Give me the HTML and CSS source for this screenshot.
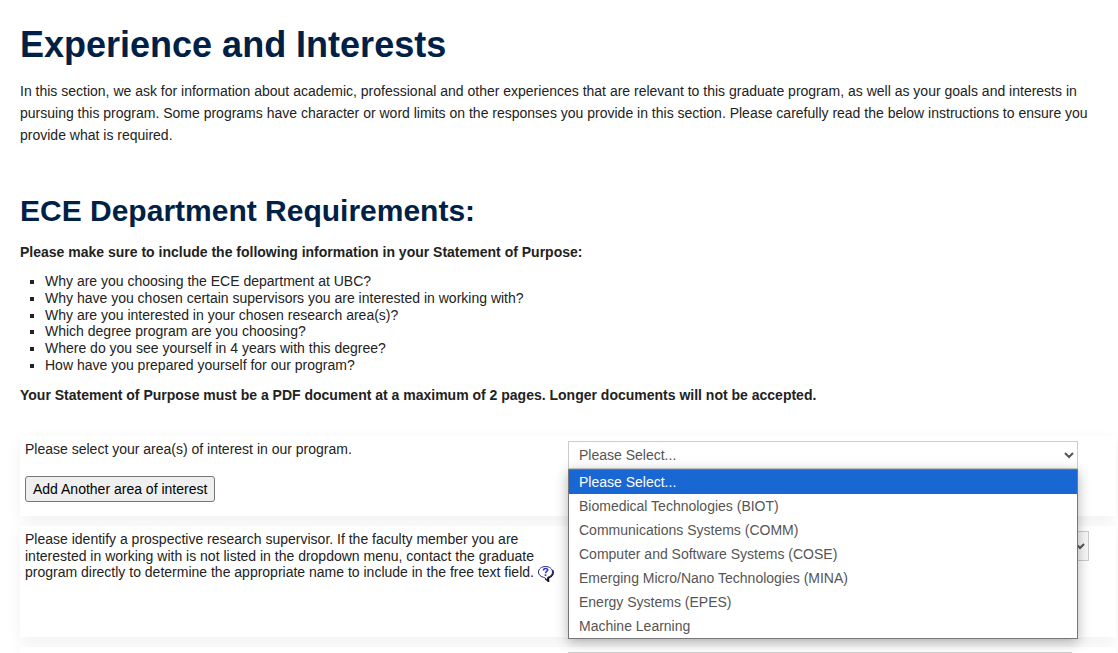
FILE: index.html
```html
<!DOCTYPE html>
<html lang="en">
<head>
<meta charset="utf-8">
<title>Experience and Interests</title>
<link rel="stylesheet" href="styles.css">
</head>
<body>
<main class="page">
  <h1 class="title">Experience and Interests</h1>
  <p class="intro">In this section, we ask for information about academic, professional and other experiences that are relevant to this graduate program, as well as your goals and interests in pursuing this program. Some programs have character or word limits on the responses you provide in this section. Please carefully read the below instructions to ensure you provide what is required.</p>
  <h2 class="subtitle">ECE Department Requirements:</h2>
  <p class="note">Please make sure to include the following information in your Statement of Purpose:</p>
  <ul class="questions">
    <li>Why are you choosing the ECE department at UBC?</li>
    <li>Why have you chosen certain supervisors you are interested in working with?</li>
    <li>Why are you interested in your chosen research area(s)?</li>
    <li>Which degree program are you choosing?</li>
    <li>Where do you see yourself in 4 years with this degree?</li>
    <li>How have you prepared yourself for our program?</li>
  </ul>
  <p class="note">Your Statement of Purpose must be a PDF document at a maximum of 2 pages. Longer documents will not be accepted.</p>

  <form class="fields">
    <div class="card">
      <div class="prompt">
        <label for="area">Please select your area(s) of interest in our program.</label>
        <button class="add" type="button">Add Another area of interest</button>
      </div>
      <div class="answer">
        <div class="dropdown">
          <select class="control" id="area">
            <option>Please Select...</option>
          </select>
          <ul class="menu" role="listbox" aria-label="Area of interest">
            <li class="choice active" role="option" aria-selected="true">Please Select...</li>
            <li class="choice" role="option">Biomedical Technologies (BIOT)</li>
            <li class="choice" role="option">Communications Systems (COMM)</li>
            <li class="choice" role="option">Computer and Software Systems (COSE)</li>
            <li class="choice" role="option">Emerging Micro/Nano Technologies (MINA)</li>
            <li class="choice" role="option">Energy Systems (EPES)</li>
            <li class="choice" role="option">Machine Learning</li>
          </ul>
        </div>
      </div>
    </div>
    <div class="card tall">
      <div class="prompt">
        <div><label for="supervisor">Please identify a prospective research supervisor. If the faculty member you are interested in working with is not listed in the dropdown menu, contact the graduate program directly to determine the appropriate name to include in the free text field.</label>
        <a class="help" href="#help" aria-label="Help"><svg width="16" height="16" viewBox="0 0 16 16" aria-hidden="true"><path d="M14.500 4c1.500 3 .5 6.500-4 7.800v3.700L7 12.500" fill="none" stroke="#111" stroke-width="1.500"/><path d="M7.500 .5c4 0 7 2.500 7 5.500 0 2.500-1.800 4.500-5 5.300v3L6.500 11.500C3 11 .5 9 .5 6S3.500 .5 7.500 .5z" fill="#fff" stroke="#22228c"/><path d="M5.500 4.500c0-2.500 4.200-2.500 4.200-.5C9.700 5.500 7.500 5.500 7.500 7.300M7.500 8.300v1.700" fill="none" stroke="#3333cc" stroke-width="1.600"/></svg></a></div>
      </div>
      <div class="answer">
        <select class="control wide" id="supervisor"><option></option></select>
      </div>
    </div>
    <div class="card">
      <div class="prompt"></div>
      <div class="answer">
        <input class="control narrow" type="text" aria-label="Supervisor name">
      </div>
    </div>
  </form>
</main>
</body>
</html>
```
FILE: styles.css
```css
* { box-sizing: border-box; }

body {
  margin: 0;
  height: 100vh;
  overflow: hidden;
  background: #fff;
  color: #222;
  font: 14px/1.2 "Liberation Sans", Arial, sans-serif;
}

.page { padding: 25px 2px 0 20px; }

.title, .subtitle { margin: 0; color: #002145; font-weight: bold; }
.title { font-size: 36px; line-height: 40px; }
.subtitle { font-size: 30px; line-height: 36px; }

.intro { margin: 15px 8px 47px 0; line-height: 22px; }
.note { margin: 12px 0 10px; font-weight: bold; line-height: 22px; }

.questions {
  margin: 0 0 10px;
  padding-left: 25px;
  list-style: square;
}
.questions + .note { margin: 0; }

.fields { display: grid; gap: 10px; margin-top: 30px; }

.card {
  display: grid;
  grid-template-columns: 1fr 1fr;
  min-height: 80px;
  padding: 5px 0;
  background: rgba(255, 255, 255, .7);
  box-shadow: 0 5px 15px rgba(0, 0, 0, .06);
}
.tall { min-height: 111px; }

.prompt {
  display: flex;
  flex-direction: column;
  align-items: flex-start;
  gap: 18px;
  padding: 0 5px;
}

.add {
  height: 26px;
  padding: 2px 7px 0;
  border: 1px solid #767676;
  border-radius: 3px;
  background: #efefef;
  color: #000;
  font: inherit;
}

.help svg { display: inline-block; vertical-align: -5px; }

.dropdown { position: relative; width: 93%; }

.control {
  display: block;
  width: 100%;
  height: 28px;
  padding: 0 7px 0 6px;
  border: 1px solid #ccc;
  border-radius: 0;
  background: #fff;
  color: #555;
  font: inherit;
}
.wide { width: 95%; height: 30px; background: #f8f8f8; }
.narrow { width: 92%; }

.menu {
  position: absolute;
  z-index: 1;
  top: 100%;
  left: 0;
  width: 100%;
  margin: 0;
  padding: 0;
  border: 1px solid #767676;
  background: #fff;
  box-shadow: 0 3px 12px rgba(0, 0, 0, .3);
  color: #555;
  list-style: none;
}
.choice { padding: 0 10px; line-height: 24px; }
.active { background: #1967d2; color: #fff; }
```
